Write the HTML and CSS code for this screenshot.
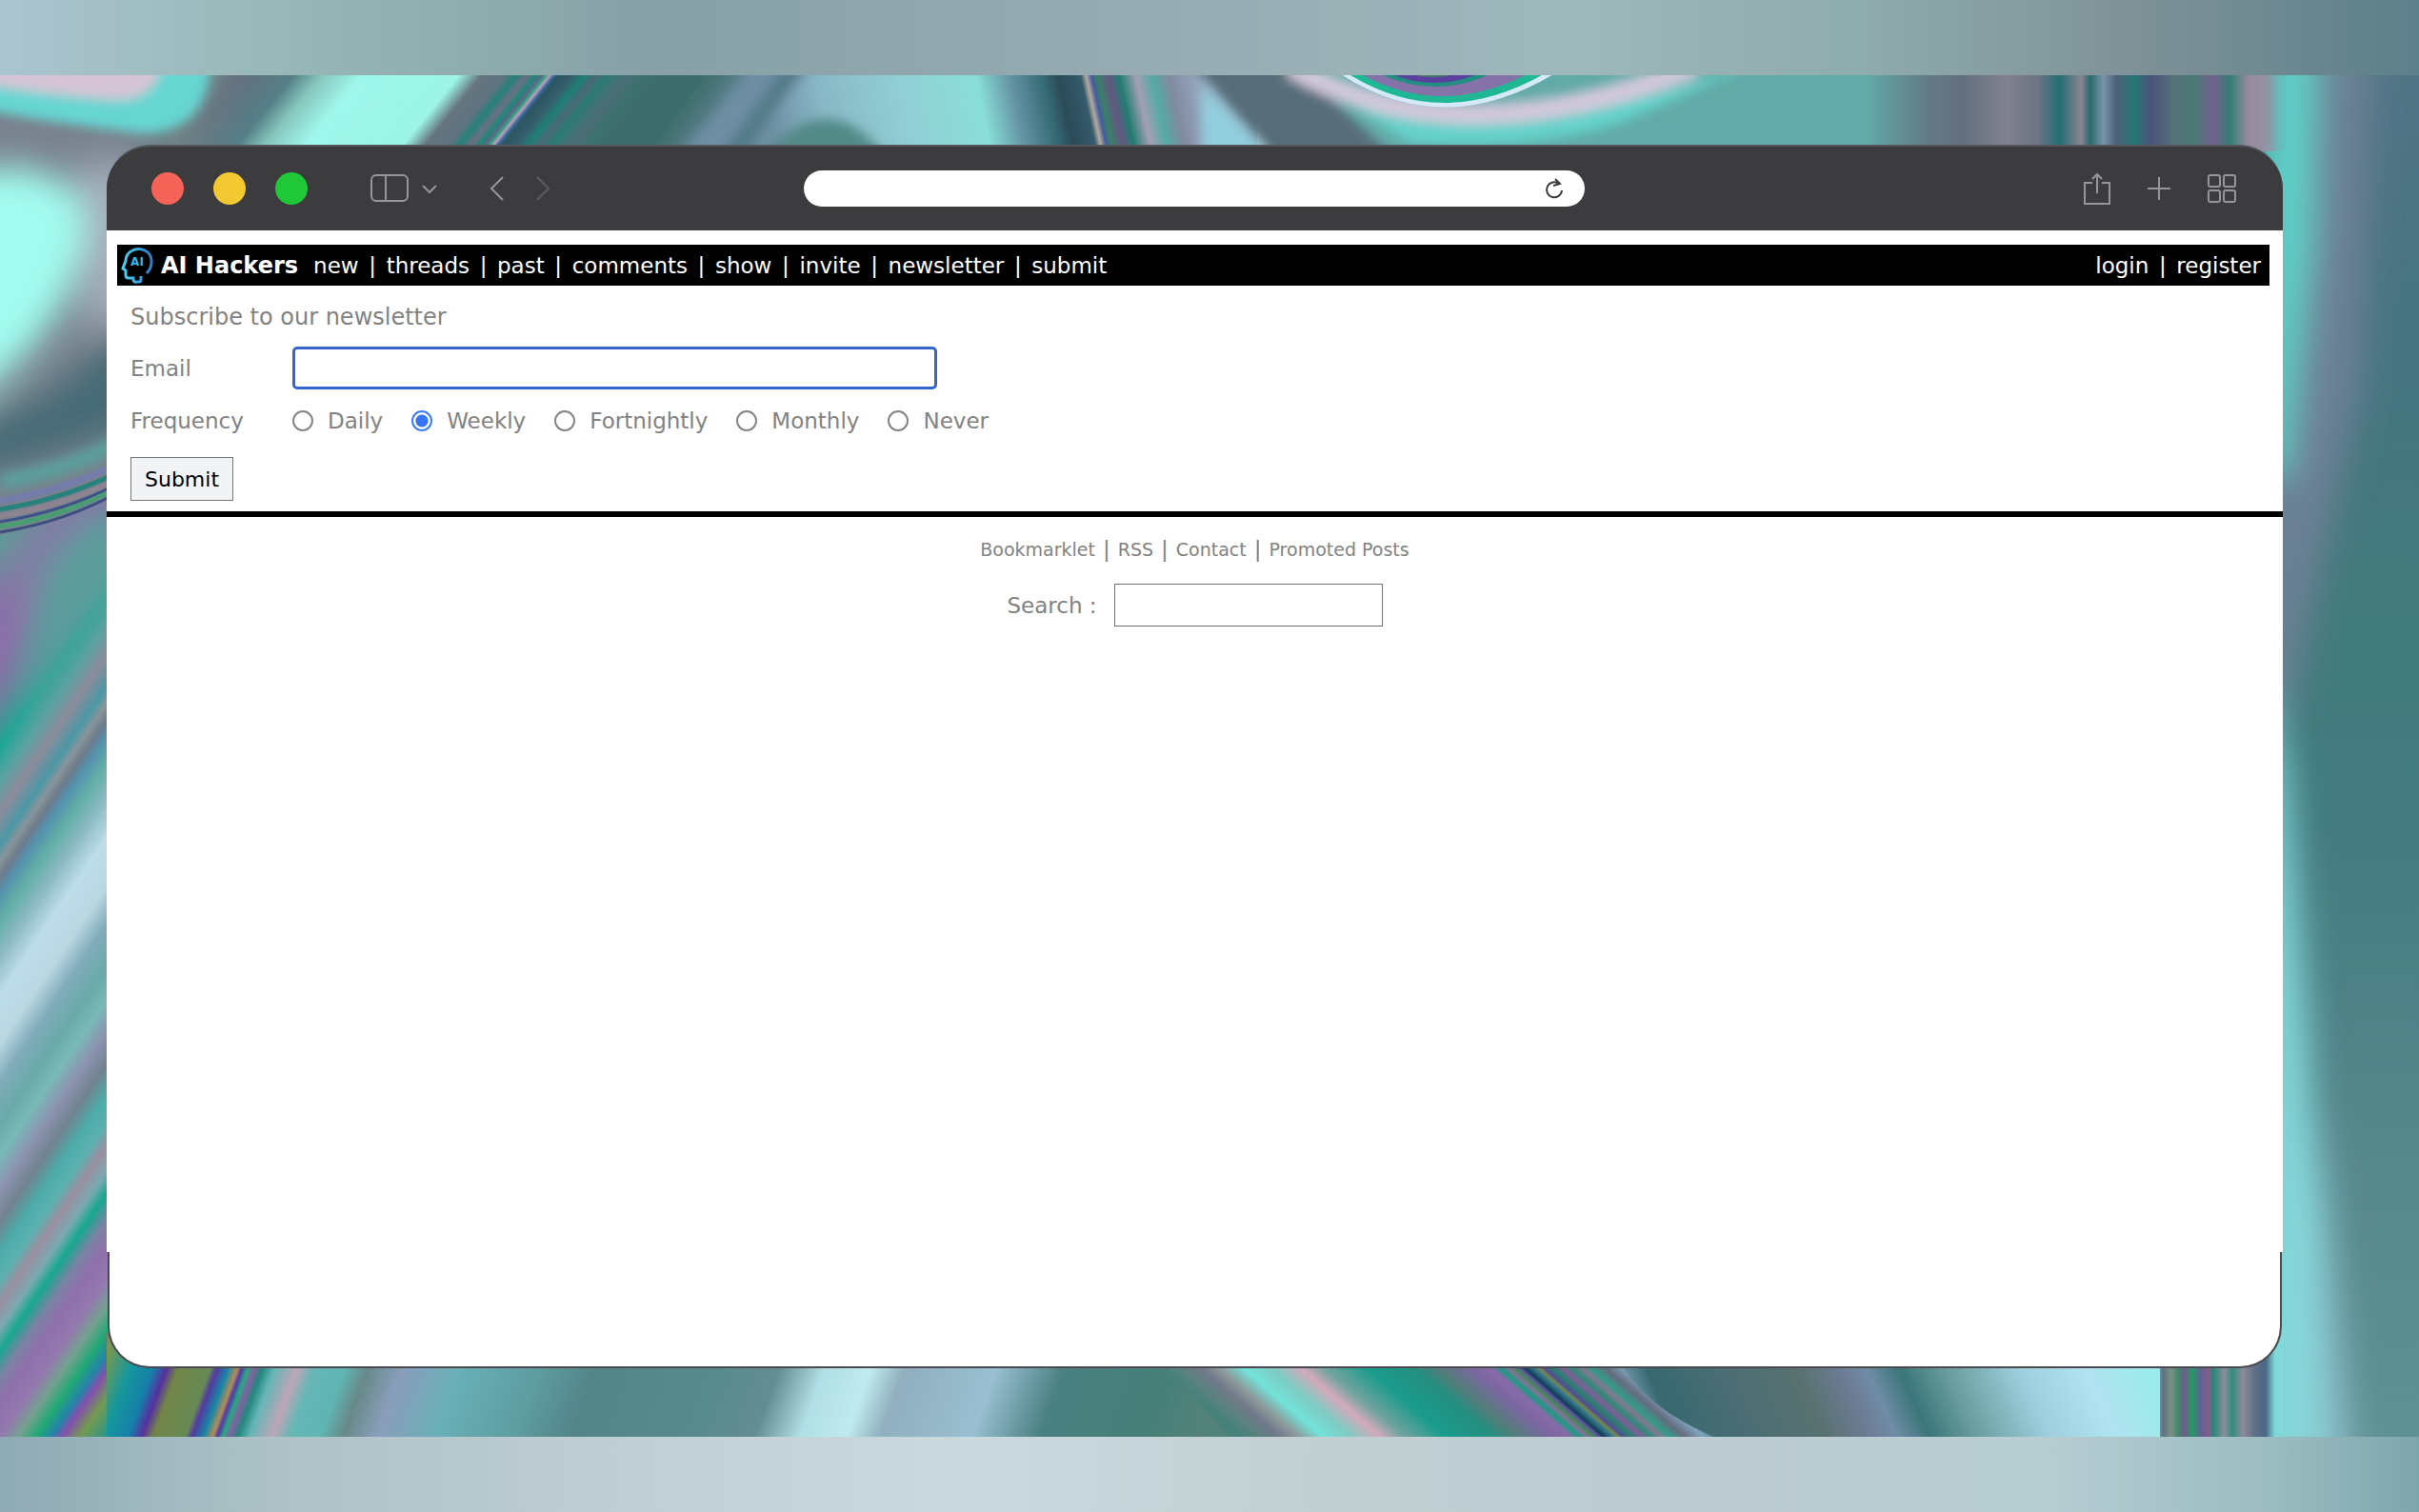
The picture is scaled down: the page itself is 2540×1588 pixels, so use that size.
FILE: index.html
```html
<!DOCTYPE html>
<html lang="en">
<head>
<meta charset="UTF-8" />
<meta name="viewport" content="width=device-width, initial-scale=1" />
<title>AI Hackers - Newsletter</title>
<link rel="stylesheet" href="styles.css">
</head>
<body>

<!-- Wallpaper -->
<svg class="wallpaper" viewBox="0 0 2540 1588" preserveAspectRatio="none" aria-hidden="true">
  <defs>
    <linearGradient id="bandTop">
      <stop offset="0" stop-color="#abc5cf"/><stop offset=".1" stop-color="#9ab9ba"/><stop offset=".2" stop-color="#8eacac"/><stop offset=".27" stop-color="#87a1a7"/><stop offset=".5" stop-color="#98adb3"/><stop offset=".65" stop-color="#9eb8bc"/><stop offset=".77" stop-color="#8eabad"/><stop offset=".88" stop-color="#7f9297"/><stop offset="1" stop-color="#5c808a"/>
    </linearGradient>
    <linearGradient id="bandBottom">
      <stop offset="0" stop-color="#8eaab3"/><stop offset=".1" stop-color="#abc0c5"/><stop offset=".25" stop-color="#bfced2"/><stop offset=".4" stop-color="#c9d9de"/><stop offset=".55" stop-color="#c2cfd2"/><stop offset=".7" stop-color="#bdcbd2"/><stop offset=".84" stop-color="#b8ced3"/><stop offset=".94" stop-color="#9bbcc0"/><stop offset="1" stop-color="#7da6ab"/>
    </linearGradient>
    <linearGradient id="slantA" gradientUnits="userSpaceOnUse" x1="200" y1="0" x2="800" y2="0" gradientTransform="translate(0 79) skewX(-39)">
      <stop offset="0" stop-color="#6f938f"/><stop offset=".08" stop-color="#65707f"/><stop offset=".18" stop-color="#547f86"/><stop offset=".23" stop-color="#86c6bd"/><stop offset=".3" stop-color="#9ff6ea"/><stop offset=".47" stop-color="#9cf5e6"/><stop offset=".51" stop-color="#66757f"/><stop offset=".55" stop-color="#5f7381"/><stop offset=".57" stop-color="#258178"/><stop offset=".59" stop-color="#6b7085"/><stop offset=".605" stop-color="#208779"/><stop offset=".615" stop-color="#5c6785"/><stop offset=".623" stop-color="#36a285"/><stop offset=".629" stop-color="#bba0bd"/><stop offset=".637" stop-color="#376696"/><stop offset=".645" stop-color="#2b555f"/><stop offset=".67" stop-color="#365f6d"/><stop offset=".69" stop-color="#1e8175"/><stop offset=".71" stop-color="#4c6878"/><stop offset=".73" stop-color="#287d75"/><stop offset=".77" stop-color="#586d7d"/><stop offset=".8" stop-color="#397e7b"/><stop offset=".84" stop-color="#376765"/><stop offset=".93" stop-color="#41706f"/><stop offset="1" stop-color="#668698"/>
    </linearGradient>
    <linearGradient id="slantB" gradientUnits="userSpaceOnUse" x1="740" y1="0" x2="1320" y2="0" gradientTransform="translate(0 79) skewX(12)">
      <stop offset="0" stop-color="#668698"/><stop offset=".1" stop-color="#6e90a3"/><stop offset=".2" stop-color="#88b7c5"/><stop offset=".35" stop-color="#91cfd4"/><stop offset=".49" stop-color="#89ded8"/><stop offset=".55" stop-color="#6595a4"/><stop offset=".61" stop-color="#366b75"/><stop offset=".64" stop-color="#2b4b58"/><stop offset=".68" stop-color="#345a6c"/><stop offset=".69" stop-color="#b3aaa0"/><stop offset=".7" stop-color="#465b9c"/><stop offset=".71" stop-color="#39816a"/><stop offset=".73" stop-color="#645681"/><stop offset=".75" stop-color="#217d70"/><stop offset=".78" stop-color="#a39fb4"/><stop offset=".81" stop-color="#54aaa4"/><stop offset=".84" stop-color="#818a9f"/><stop offset=".92" stop-color="#a1b8d0"/><stop offset="1" stop-color="#8fbfd0"/>
    </linearGradient>
    <linearGradient id="slantC" gradientUnits="userSpaceOnUse" x1="1960" y1="0" x2="2420" y2="0">
      <stop offset="0" stop-color="#62aaa7"/><stop offset=".14" stop-color="#637a86"/><stop offset=".22" stop-color="#646f7d"/><stop offset=".32" stop-color="#81818f"/><stop offset=".39" stop-color="#6d7484"/><stop offset=".44" stop-color="#246d72"/><stop offset=".49" stop-color="#8a8391"/><stop offset=".51" stop-color="#286b6b"/><stop offset=".54" stop-color="#7a93a9"/><stop offset=".57" stop-color="#4d6278"/><stop offset=".61" stop-color="#257775"/><stop offset=".65" stop-color="#4c527a"/><stop offset=".7" stop-color="#557078"/><stop offset=".75" stop-color="#4a7974"/><stop offset=".79" stop-color="#76618e"/><stop offset=".83" stop-color="#337f75"/><stop offset=".87" stop-color="#958a9c"/><stop offset=".91" stop-color="#9590a2"/><stop offset=".95" stop-color="#60c3bf"/><stop offset="1" stop-color="#62c9c3"/>
    </linearGradient>
    <linearGradient id="leftLow" gradientUnits="userSpaceOnUse" x1="0" y1="560" x2="0" y2="1690" gradientTransform="skewY(-56)">
      <stop offset="0" stop-color="#5d9c96"/><stop offset=".07" stop-color="#8578a4"/><stop offset=".11" stop-color="#8d71a8"/><stop offset=".16" stop-color="#5f859a"/><stop offset=".2" stop-color="#1ca794"/><stop offset=".23" stop-color="#59a3a3"/><stop offset=".26" stop-color="#8d8b9b"/><stop offset=".29" stop-color="#4c98a6"/><stop offset=".305" stop-color="#88959b"/><stop offset=".32" stop-color="#6e7b8b"/><stop offset=".335" stop-color="#5591ad"/><stop offset=".36" stop-color="#62afa7"/><stop offset=".39" stop-color="#89b8c1"/><stop offset=".43" stop-color="#bddde9"/><stop offset=".475" stop-color="#b9d7e1"/><stop offset=".51" stop-color="#81acbb"/><stop offset=".55" stop-color="#69aaa9"/><stop offset=".58" stop-color="#79b9b8"/><stop offset=".61" stop-color="#8c93b0"/><stop offset=".64" stop-color="#71838f"/><stop offset=".67" stop-color="#4cadaa"/><stop offset=".695" stop-color="#5cb0b0"/><stop offset=".715" stop-color="#9a8f9f"/><stop offset=".74" stop-color="#7ba9b2"/><stop offset=".76" stop-color="#17a88f"/><stop offset=".785" stop-color="#7b82a4"/><stop offset=".81" stop-color="#906fad"/><stop offset=".84" stop-color="#9379ae"/><stop offset=".865" stop-color="#74a18f"/><stop offset=".89" stop-color="#20a875"/><stop offset=".91" stop-color="#2385a8"/><stop offset=".925" stop-color="#8350ae"/><stop offset=".95" stop-color="#739a50"/><stop offset="1" stop-color="#14949e"/>
    </linearGradient>
    <linearGradient id="bottomA" gradientUnits="userSpaceOnUse" x1="60" y1="0" x2="1260" y2="0" gradientTransform="translate(0 1509) skewX(-20)">
      <stop offset="0" stop-color="#8053ad"/><stop offset=".017" stop-color="#79984f"/><stop offset=".042" stop-color="#15979d"/><stop offset=".062" stop-color="#167fa8"/><stop offset=".074" stop-color="#5630a0"/><stop offset=".084" stop-color="#728547"/><stop offset=".112" stop-color="#668a54"/><stop offset=".118" stop-color="#5439a0"/><stop offset=".128" stop-color="#1686a8"/><stop offset=".136" stop-color="#b28d56"/><stop offset=".14" stop-color="#5239a5"/><stop offset=".145" stop-color="#2aa883"/><stop offset=".151" stop-color="#7f619f"/><stop offset=".158" stop-color="#23887e"/><stop offset=".168" stop-color="#63b5b6"/><stop offset=".188" stop-color="#bda6b6"/><stop offset=".204" stop-color="#65b7b6"/><stop offset=".23" stop-color="#5fb5b3"/><stop offset=".25" stop-color="#678989"/><stop offset=".28" stop-color="#8a9ebb"/><stop offset=".33" stop-color="#69b0b7"/><stop offset=".4" stop-color="#5e9da0"/><stop offset=".45" stop-color="#538488"/><stop offset=".56" stop-color="#598b8e"/><stop offset=".61" stop-color="#648d92"/><stop offset=".65" stop-color="#b2dfe5"/><stop offset=".69" stop-color="#bfebee"/><stop offset=".72" stop-color="#91afbe"/><stop offset=".8" stop-color="#99bfd0"/><stop offset=".86" stop-color="#4a8081"/><stop offset=".95" stop-color="#468078"/><stop offset="1" stop-color="#538279"/>
    </linearGradient>
    <linearGradient id="bottomB" gradientUnits="userSpaceOnUse" x1="1220" y1="0" x2="1720" y2="0" gradientTransform="translate(0 1436) skewX(49)">
      <stop offset="0" stop-color="#47827a"/><stop offset=".04" stop-color="#5c817f"/><stop offset=".08" stop-color="#71798a"/><stop offset=".12" stop-color="#8c9b9b"/><stop offset=".17" stop-color="#73e2d9"/><stop offset=".23" stop-color="#7ecbc3"/><stop offset=".29" stop-color="#d4aabb"/><stop offset=".34" stop-color="#72a39f"/><stop offset=".43" stop-color="#199c8c"/><stop offset=".53" stop-color="#258e80"/><stop offset=".58" stop-color="#547d7b"/><stop offset=".65" stop-color="#7b67a1"/><stop offset=".69" stop-color="#886aa8"/><stop offset=".71" stop-color="#1a9b82"/><stop offset=".725" stop-color="#81749a"/><stop offset=".74" stop-color="#44865a"/><stop offset=".75" stop-color="#6256a0"/><stop offset=".76" stop-color="#103d58"/><stop offset=".78" stop-color="#37798c"/><stop offset=".79" stop-color="#73894e"/><stop offset=".8" stop-color="#534c92"/><stop offset=".82" stop-color="#288170"/><stop offset=".84" stop-color="#805e9a"/><stop offset=".86" stop-color="#318978"/><stop offset=".88" stop-color="#817991"/><stop offset=".9" stop-color="#339a87"/><stop offset=".93" stop-color="#656c7f"/><stop offset=".97" stop-color="#7ea4be"/><stop offset="1" stop-color="#4c707a"/>
    </linearGradient>
    <linearGradient id="bottomC" gradientUnits="userSpaceOnUse" x1="1700" y1="0" x2="2400" y2="0" gradientTransform="translate(0 1436) skewX(24)">
      <stop offset="0" stop-color="#7298ae"/><stop offset=".04" stop-color="#37696f"/><stop offset=".15" stop-color="#4b6d74"/><stop offset=".26" stop-color="#58716f"/><stop offset=".33" stop-color="#6d7b94"/><stop offset=".37" stop-color="#6f8ca6"/><stop offset=".42" stop-color="#3b7679"/><stop offset=".49" stop-color="#6a9d9e"/><stop offset=".6" stop-color="#9fcfde"/><stop offset=".7" stop-color="#b1e3f0"/><stop offset=".78" stop-color="#9ceaea"/><stop offset="1" stop-color="#8ee8e5"/>
    </linearGradient>
    <linearGradient id="bottomD" gradientUnits="userSpaceOnUse" x1="2260" y1="0" x2="2400" y2="0">
      <stop offset="0" stop-color="#8fe5e2"/><stop offset=".08" stop-color="#5d7284"/><stop offset=".14" stop-color="#7b9184"/><stop offset=".2" stop-color="#3e866c"/><stop offset=".24" stop-color="#75588f"/><stop offset=".3" stop-color="#229b63"/><stop offset=".36" stop-color="#5d6292"/><stop offset=".42" stop-color="#865b8b"/><stop offset=".46" stop-color="#278877"/><stop offset=".54" stop-color="#8c8c9d"/><stop offset=".6" stop-color="#308b7c"/><stop offset=".68" stop-color="#8f8b9b"/><stop offset=".76" stop-color="#617188"/><stop offset=".85" stop-color="#4a6686"/><stop offset=".92" stop-color="#7ed8d9"/><stop offset="1" stop-color="#84d8da"/>
    </linearGradient>
    <linearGradient id="rightBase" x2="0" y2="1">
      <stop offset="0" stop-color="#517486"/><stop offset=".2" stop-color="#46747f"/><stop offset=".4" stop-color="#427b7b"/><stop offset=".55" stop-color="#437b7f"/><stop offset=".8" stop-color="#57888b"/><stop offset="1" stop-color="#5f9193"/>
    </linearGradient>
    <filter id="soft6" x="-50%" y="-50%" width="200%" height="200%"><feGaussianBlur stdDeviation="6"/></filter>
    <filter id="soft18" x="-50%" y="-50%" width="200%" height="200%"><feGaussianBlur stdDeviation="18"/></filter>
    <clipPath id="picture"><rect x="0" y="79" width="2540" height="1430"/></clipPath>
  </defs>

  <rect width="2540" height="80" fill="url(#bandTop)"/>
  <rect y="1508" width="2540" height="80" fill="url(#bandBottom)"/>

  <g clip-path="url(#picture)">
    <!-- right edge -->
    <rect x="2300" y="79" width="240" height="1430" fill="url(#rightBase)"/>
    <g filter="url(#soft18)">
      <path d="M2380 40H2490L2480 400L2400 760H2370Z" fill="#6c8194"/>
      <path d="M2370 40H2432L2428 250L2400 500H2370Z" fill="#5fd0c8"/>
      <path d="M2370 700L2400 800L2424 1100L2450 1560H2370Z" fill="#84d8da"/>
      <path d="M2434 1150L2470 1560H2434Z" fill="#8fbdca"/>
    </g>

    <!-- left edge -->
    <rect x="0" y="500" width="130" height="1010" fill="url(#leftLow)"/>
    <path d="M0 60H260V200H130V508Q60 550 0 562Z" fill="#79828e"/>
    <g filter="url(#soft18)">
      <path d="M-40 450Q60 430 150 320V440Q60 480 -40 500Z" fill="#456a74"/>
      <path d="M80 170H150V330L90 350Z" fill="#a3abba"/>
      <path d="M-60 190Q50 150 90 220Q90 350 -60 440Z" fill="#a2fbee"/>
      <path d="M40 600Q90 530 130 530V620Q70 660 20 790Z" fill="#5d9f9c"/>
      <path d="M-20 590Q20 620 10 700L-20 740Z" fill="#8b6cab"/>
    </g>
    <path d="M0 506Q70 495 130 462" fill="none" stroke="#5aa19c" stroke-width="16" filter="url(#soft6)"/>
    <path d="M0 526Q70 515 130 484" fill="none" stroke="#747caa" stroke-width="7"/>
    <path d="M0 535Q70 524 130 493" fill="none" stroke="#27827d" stroke-width="5"/>
    <path d="M0 542Q70 531 130 500" fill="none" stroke="#8d8391" stroke-width="5"/>
    <path d="M0 548Q70 537 130 505" fill="none" stroke="#3c5187" stroke-width="3"/>
    <path d="M0 553Q70 542 130 509" fill="none" stroke="#4a9c73" stroke-width="5"/>
    <path d="M0 559Q70 548 130 514" fill="none" stroke="#3b4f7e" stroke-width="3"/>

    <!-- top edge -->
    <rect x="190" y="79" width="580" height="80" fill="url(#slantA)"/>
    <path d="M740 79H1320V160H684Z" fill="url(#slantB)"/>
    <g filter="url(#soft18)">
      <path d="M690 40H800L680 200H570Z" fill="#3d6d6c"/>
      <path d="M160 60H230L210 180H150Z" fill="#6d8286"/>
    </g>
    <g filter="url(#soft6)">
      <path d="M800 60H860L760 180H700Z" fill="#6d8ea3"/>
      <path d="M830 60H850L770 180H745Z" fill="#527b88"/>
      <path d="M-20 60H222Q220 140 150 140Q60 130 -20 115Z" fill="#66d6d1"/>
      <path d="M-20 60H172Q165 107 120 105Q50 100 -20 88Z" fill="#d5c4d5"/>
      <path d="M800 165Q870 85 930 165Z" fill="#538987"/>
    </g>
    <path d="M1290 79H2000V160H1380Z" fill="#62aaa7"/>
    <g filter="url(#soft6)">
      <path d="M1262 90L1350 180H1262Z" fill="#92cedd"/>
      <path d="M1245 60H1350L1480 180H1350Z" fill="#566d79"/>
      <path d="M1340 60Q1500 190 1860 60L1700 130Q1600 160 1480 150Z" fill="#65d2ca"/>
      <path d="M1355 70Q1530 170 1780 70" fill="none" stroke="#d2c8da" stroke-width="22"/>
    </g>
    <path d="M1396 70Q1515 155 1644 70Z" fill="#d5eaf8"/>
    <path d="M1404 70Q1514 146 1634 70Z" fill="#20b894"/>
    <path d="M1416 70Q1512 132 1618 70Z" fill="#8572a8"/>
    <path d="M1434 70Q1507 112 1580 70Z" fill="#208e80"/>
    <path d="M1444 70Q1507 104 1568 70Z" fill="#5a419e"/>
    <path d="M1460 70Q1505 92 1550 70Z" fill="#497b66"/>
    <rect x="1960" y="79" width="440" height="80" fill="url(#slantC)"/>

    <!-- bottom edge -->
    <rect x="112" y="1400" width="1180" height="110" fill="url(#bottomA)"/>
    <path d="M1220 1430H1720L1820 1509H1290Z" fill="url(#bottomB)"/>
    <path d="M1700 1430H2280V1509H1800Q1730 1480 1700 1430Z" fill="url(#bottomC)"/>
    <rect x="2268" y="1380" width="130" height="130" fill="url(#bottomD)"/>
  </g>
</svg>

<div class="desktop">
  <div class="window">

    <!-- Browser toolbar -->
    <div class="titlebar">
      <div class="tools-left">
        <span class="light red"></span>
        <span class="light yellow"></span>
        <span class="light green"></span>
        <button class="tool sidebar-btn" aria-label="Sidebar">
          <svg width="70" height="32" viewBox="0 0 70 32"><rect x="1" y="2" width="38" height="27" rx="5"/><path d="M16 2V29M55 13L62 20L69 13"/></svg>
        </button>
        <button class="tool back-btn" aria-label="Back">
          <svg width="16" height="26" viewBox="0 0 16 26"><path d="M14 1L2 13L14 25"/></svg>
        </button>
        <button class="tool forward-btn" aria-label="Forward">
          <svg width="16" height="26" viewBox="0 0 16 26"><path d="M2 1L14 13L2 25"/></svg>
        </button>
      </div>
      <div class="address">
        <input class="address-input" type="text" aria-label="Address">
        <button class="reload" aria-label="Reload">
          <svg width="20" height="24" viewBox="0 0 20 24"><path d="M18 14A8 8 0 1 1 15 7M11 2L16 7L9 9"/></svg>
        </button>
      </div>
      <div class="tools-right">
        <button class="tool" aria-label="Share">
          <svg width="28" height="34" viewBox="0 0 28 34"><path d="M9 11H1V33H27V11H19M14 22V2M9 7L14 2L19 7"/></svg>
        </button>
        <button class="tool" aria-label="New tab">
          <svg width="24" height="24" viewBox="0 0 24 24"><path d="M12 0V24M0 12H24"/></svg>
        </button>
        <button class="tool" aria-label="Tab overview">
          <svg width="30" height="30" viewBox="0 0 30 30"><rect x="1" y="1" width="12" height="12" rx="2"/><rect x="17" y="1" width="12" height="12" rx="2"/><rect x="1" y="17" width="12" height="12" rx="2"/><rect x="17" y="17" width="12" height="12" rx="2"/></svg>
        </button>
      </div>
    </div>

    <!-- Site -->
    <div class="page">
      <header class="site-header">
        <svg class="logo" width="34" height="38" viewBox="0 0 34 38" aria-hidden="true">
          <defs><linearGradient id="logoLine"><stop offset="0" stop-color="#4fd0ee"/><stop offset="1" stop-color="#2b7fd0"/></linearGradient></defs>
          <path d="M27 27C34 20 34 7 25 3C16 -1 5 4 5 14L2 22L5 24V29Q5 32 8 32H13V34Q14 37 17 36H19Q21 36 21 33V30" fill="none" stroke="url(#logoLine)" stroke-width="3"/>
          <text x="17" y="19" text-anchor="middle" class="logo-text">AI</text>
        </svg>
        <a class="brand" href="#">AI Hackers</a>
        <nav class="nav">
          <a href="#">new</a><span>|</span>
          <a href="#">threads</a><span>|</span>
          <a href="#">past</a><span>|</span>
          <a href="#">comments</a><span>|</span>
          <a href="#">show</a><span>|</span>
          <a href="#">invite</a><span>|</span>
          <a href="#">newsletter</a><span>|</span>
          <a href="#">submit</a>
        </nav>
        <nav class="nav account">
          <a href="#">login</a><span>|</span>
          <a href="#">register</a>
        </nav>
      </header>

      <form class="subscribe">
        <p class="intro">Subscribe to our newsletter</p>
        <div class="row">
          <label class="row-label" for="email">Email</label>
          <input class="email" type="email" id="email">
        </div>
        <div class="row" role="radiogroup" aria-labelledby="freqLabel">
          <span class="row-label" id="freqLabel">Frequency</span>
          <div class="choices">
            <label><input type="radio" name="freq" value="daily">Daily</label>
            <label><input type="radio" name="freq" value="weekly" checked>Weekly</label>
            <label><input type="radio" name="freq" value="fortnightly">Fortnightly</label>
            <label><input type="radio" name="freq" value="monthly">Monthly</label>
            <label><input type="radio" name="freq" value="never">Never</label>
          </div>
        </div>
        <button class="submit" type="submit">Submit</button>
      </form>

      <footer class="site-footer">
        <div class="footer-links">
          <a href="#">Bookmarklet</a><span>|</span>
          <a href="#">RSS</a><span>|</span>
          <a href="#">Contact</a><span>|</span>
          <a href="#">Promoted Posts</a>
        </div>
        <form class="search">
          <label for="search">Search :</label>
          <input type="text" id="search">
        </form>
      </footer>
    </div>
    <div class="window-base"></div>
  </div>
</div>

</body>
</html>
```

FILE: styles.css
```css
* {
  box-sizing: border-box;
}

body {
  margin: 0;
  font-family: Verdana, "DejaVu Sans", sans-serif;
  font-size: 23px;
  line-height: 28px;
  color: #828282;
}

a {
  color: inherit;
  text-decoration: none;
}

button {
  font-family: inherit;
  cursor: pointer;
}

/* Wallpaper sits behind everything */
.wallpaper {
  position: fixed;
  inset: 0;
  width: 100%;
  height: 100%;
  z-index: -1;
}

.desktop {
  display: flex;
  min-height: 100vh;
  padding: 152px 143px 151px 112px;
}

.window {
  display: flex;
  flex-direction: column;
  flex: 1;
}

/* Browser toolbar */
.titlebar {
  display: grid;
  grid-template-columns: 1fr minmax(0, 820px) 1fr;
  align-items: center;
  height: 90px;
  padding: 0 49px 0 47px;
  background: #3c3b3d;
  border-top: 2px solid #51575c;
  border-radius: 46px 46px 0 0;
}

.tools-left,
.tools-right {
  display: flex;
  align-items: center;
}

.light {
  width: 34px;
  height: 34px;
  margin-right: 31px;
  border-radius: 50%;
}

.red { background: #f66458; }
.yellow { background: #f3c932; }
.green { background: #1ec837; }

.tool {
  display: flex;
  padding: 0;
  background: none;
  border: none;
}

.tool svg {
  fill: none;
  stroke: #969698;
  stroke-width: 2;
}

.sidebar-btn { margin-left: 35px; }
.back-btn { margin-left: 55px; }
.forward-btn { margin-left: 32px; }
.forward-btn svg { stroke: #5d5d60; }

.address {
  display: flex;
  align-items: center;
  height: 38px;
  padding-right: 22px;
  background: #fff;
  border-radius: 19px;
}

.address-input {
  flex: 1;
  margin-left: 20px;
  border: none;
  outline: none;
  background: none;
  font: inherit;
}

.reload {
  display: flex;
  padding: 0;
  background: none;
  border: none;
}

.reload svg {
  fill: none;
  stroke: #3c3b3d;
  stroke-width: 2;
}

.tools-right {
  justify-content: flex-end;
  gap: 39px;
}

/* Site */
.page {
  flex: 1;
  padding-top: 15px;
  background: #fff;
}

.site-header {
  display: flex;
  align-items: center;
  height: 43px;
  margin: 0 14px 0 11px;
  padding: 0 9px 0 4px;
  background: #000;
  color: #fff;
}

.logo-text {
  font-size: 12px;
  font-weight: bold;
  fill: #35b6e8;
}

.brand {
  margin: 0 16px 0 8px;
  font-size: 24px;
  font-weight: bold;
}

.nav,
.footer-links {
  display: flex;
  align-items: center;
  gap: 10px;
}

.nav span {
  width: 9px;
  text-align: center;
}

.account {
  margin-left: auto;
}

.subscribe {
  padding: 19px 25px 11px;
  border-bottom: 6px solid #000;
}

.intro {
  margin: 0 0 17px;
  font-size: 24px;
}

.row {
  display: flex;
  align-items: center;
  height: 45px;
  margin-bottom: 10px;
}

.row-label {
  width: 170px;
}

.email {
  width: 677px;
  height: 45px;
  border: 3px solid #3566cd;
  border-radius: 5px;
  outline: none;
  font: inherit;
}

.choices {
  display: flex;
  gap: 30px;
}

.choices label {
  display: flex;
  align-items: center;
  gap: 15px;
}

.choices input {
  appearance: none;
  width: 22px;
  height: 22px;
  margin: 0;
  border: 2px solid #858585;
  border-radius: 50%;
}

.choices input:checked {
  border-color: #3b7cf7;
  background: radial-gradient(circle, #3574f5 6px, #fff 7px);
}

.submit {
  display: block;
  height: 46px;
  margin-top: 16px;
  padding: 0 14px;
  background: #f2f3f5;
  border: 1px solid #77787c;
  font-size: 22px;
  color: #000;
}

.site-footer {
  display: flex;
  flex-direction: column;
  align-items: center;
  padding-top: 20px;
}

.footer-links {
  gap: 8px;
}

.footer-links a {
  font-size: 19px;
}

.search {
  display: flex;
  align-items: center;
  gap: 18px;
  margin-top: 22px;
}

.search input {
  width: 282px;
  height: 45px;
  border: 1px solid #6f7074;
  font: inherit;
}

/* Rounded bottom of the browser frame */
.window-base {
  height: 122px;
  margin: 0 1px;
  background: #fff;
  border: 2px solid #4b4a50;
  border-top: none;
  border-radius: 0 0 44px 44px;
}
```
